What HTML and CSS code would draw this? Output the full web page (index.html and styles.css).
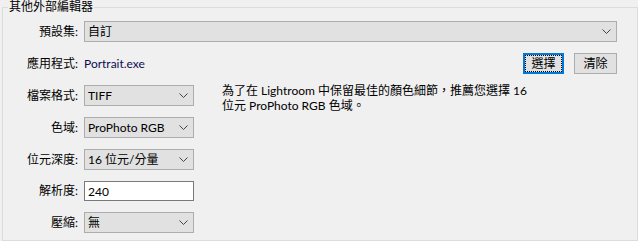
FILE: index.html
```html
<!DOCTYPE html>
<html lang="zh-Hant">
<head>
<meta charset="utf-8">
<title>其他外部編輯器</title>
<link rel="stylesheet" href="styles.css">
</head>
<body>
<fieldset class="group">
  <legend class="group-title">其他外部編輯器</legend>
  <div class="form">
    <label class="lbl">預設集:</label>
    <div class="select select-wide"><span class="select-text">自訂</span><svg class="chev" width="9" height="5" viewBox="0 0 9 5"><polyline points="0.5,0.5 4.5,4.5 8.5,0.5" fill="none" stroke="#444" stroke-width="1"/></svg></div>

    <label class="lbl">應用程式:</label>
    <div class="app-row">
      <span class="path">Portrait.exe</span>
      <div class="btns">
        <button class="btn btn-focus" type="button">選擇</button>
        <button class="btn btn-plain" type="button">清除</button>
      </div>
    </div>

    <label class="lbl">檔案格式:</label>
    <div class="select"><span class="select-text">TIFF</span><svg class="chev" width="9" height="5" viewBox="0 0 9 5"><polyline points="0.5,0.5 4.5,4.5 8.5,0.5" fill="none" stroke="#444" stroke-width="1"/></svg></div>
    <p class="note">為了在 Lightroom 中保留最佳的顏色細節，推薦您選擇 16<br>位元 ProPhoto RGB 色域。</p>

    <label class="lbl">色域:</label>
    <div class="select"><span class="select-text">ProPhoto RGB</span><svg class="chev" width="9" height="5" viewBox="0 0 9 5"><polyline points="0.5,0.5 4.5,4.5 8.5,0.5" fill="none" stroke="#444" stroke-width="1"/></svg></div>

    <label class="lbl">位元深度:</label>
    <div class="select"><span class="select-text">16 位元/分量</span><svg class="chev" width="9" height="5" viewBox="0 0 9 5"><polyline points="0.5,0.5 4.5,4.5 8.5,0.5" fill="none" stroke="#444" stroke-width="1"/></svg></div>

    <label class="lbl">解析度:</label>
    <input class="field" type="text" value="240">

    <label class="lbl">壓縮:</label>
    <div class="select"><span class="select-text">無</span><svg class="chev" width="9" height="5" viewBox="0 0 9 5"><polyline points="0.5,0.5 4.5,4.5 8.5,0.5" fill="none" stroke="#444" stroke-width="1"/></svg></div>
  </div>
</fieldset>
</body>
</html>
```
FILE: styles.css
```css
html, body {
  margin: 0;
  padding: 0;
  background: #f0f0f0;
}
body {
  font-family: Lato, "Noto Sans CJK TC", sans-serif;
  font-size: 12px;
  line-height: 14px;
  color: #000;
  width: 638px;
  height: 241px;
  overflow: hidden;
}
.group {
  margin: 0 0 0 2px;
  padding: 7px 20px 0 5px;
  border: 1px solid #dcdcdc;
  width: 636px;
  height: 241px;
  box-sizing: border-box;
  min-width: 0;
}
.group-title {
  padding: 0 1px;
  font-size: 12px;
  line-height: 14px;
}
.form {
  display: grid;
  grid-template-columns: 70px 110px 1fr;
  grid-template-rows: 21px 21px 21px 21px 21px 20px 21px;
  column-gap: 6px;
  row-gap: 11px;
}
.lbl {
  grid-column: 1;
  align-self: center;
  text-align: right;
  white-space: nowrap;
}
.select {
  grid-column: 2;
  display: flex;
  align-items: center;
  justify-content: space-between;
  box-sizing: border-box;
  height: 21px;
  padding: 0 5px 0 3px;
  background: #e1e1e1;
  border: 1px solid #adadad;
}
.select-wide {
  grid-column: 2 / 4;
}
.select-text {
  white-space: nowrap;
}
.chev {
  display: block;
  flex: none;
}
.app-row {
  grid-column: 2 / 4;
  display: flex;
  align-items: center;
  justify-content: space-between;
}
.path {
  color: #0c0c50;
}
.btns {
  display: flex;
  gap: 10px;
}
.btn {
  box-sizing: border-box;
  height: 21px;
  padding: 0;
  margin: 0;
  font: inherit;
  color: #000;
  background: #e1e1e1;
  border: 1px solid #adadad;
}
.btn-plain {
  width: 43px;
}
.btn-focus {
  width: 41px;
  border: 2px solid #0078d7;
  outline: 1px dotted #000;
  outline-offset: -3px;
}
.note {
  grid-column: 3;
  grid-row: 3 / span 2;
  align-self: start;
  margin: -1px 0 0 0;
  padding-left: 22px;
  line-height: 14.5px;
}
.field {
  grid-column: 2;
  box-sizing: border-box;
  width: 110px;
  height: 20px;
  margin: 0;
  padding: 0 3px;
  font: inherit;
  color: #000;
  background: #fff;
  border: 1px solid #7a7a7a;
  outline: none;
}
```
